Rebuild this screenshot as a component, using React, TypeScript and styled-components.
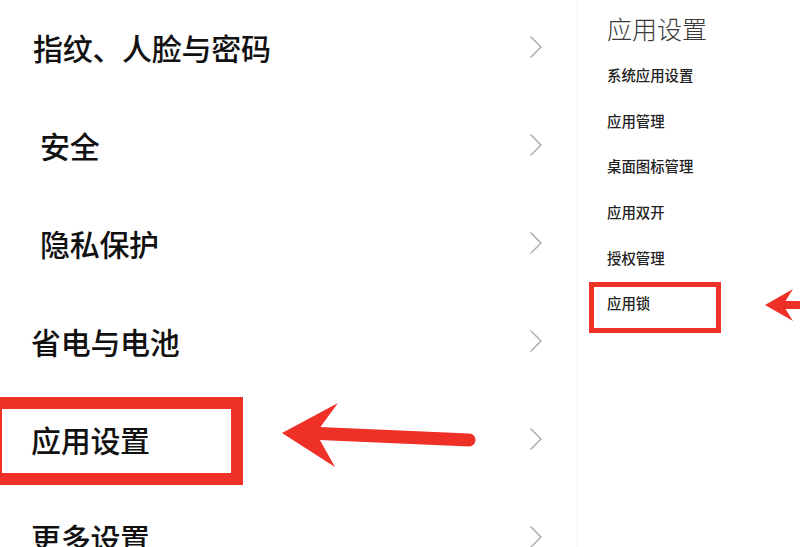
import React from 'react';
import styled, {createGlobalStyle} from 'styled-components';

const GlobalStyle = createGlobalStyle`
    html, body {
        margin:0;
        padding:0;
        background:#ffffff;
    }
    body {
        font-family:"Noto Sans CJK SC", "Noto Sans", sans-serif;
    }
`;

const Screen = styled.div`
    width:800px;
    height:547px;
    overflow:hidden;
    display:flex;
    background:#ffffff;
`;

const LeftPanel = styled.div`
    width:577px;
    flex-shrink:0;
    border-right:1px solid #f3f3f3;
    display:flex;
    flex-direction:column;
    margin-top:-2px;
`;

const Row = styled.div`
    position:relative;
    height:98px;
    flex-shrink:0;
    display:flex;
    align-items:center;
    justify-content:space-between;
    padding-right:34px;
`;

const RowLabel = styled.span<{indent:number}>`
    padding-left:${props => props.indent}px;
    font-size:30px;
    font-weight:500;
    color:#111111;
    letter-spacing:-0.3px;
`;

const BigMark = styled.div`
    position:absolute;
    left:-10px;
    top:7px;
    width:253px;
    height:88px;
    box-sizing:border-box;
    border:12px solid #ef3027;
`;

const SmallMark = styled.div`
    position:absolute;
    left:-18px;
    top:2px;
    width:132px;
    height:51px;
    box-sizing:border-box;
    border:5px solid #ef3027;
`;

const RightPanel = styled.div`
    flex:1;
    padding:12px 0 0 29px;
    display:flex;
    flex-direction:column;
`;

const PanelTitle = styled.div`
    height:32px;
    line-height:32px;
    font-size:25px;
    font-weight:300;
    color:#3a3a3a;
    margin-bottom:8px;
`;

const SubRow = styled.div`
    position:relative;
    height:45.6px;
    display:flex;
    align-items:center;
    font-size:14.4px;
    font-weight:500;
    color:#222222;
`;

const ArrowSvg = styled.svg<{x:number, y:number}>`
    position:absolute;
    left:${props => props.x}px;
    top:${props => props.y}px;
    overflow:visible;
`;

const Chevron = () => (
    <svg width="14" height="24" viewBox="0 0 14 24">
        <polyline points="1.5,1.5 12,12 1.5,22.5" fill="none" stroke="#b0b0b0" strokeWidth="1.5" />
    </svg>
);

const items = [
    {label:'指纹、人脸与密码', indent:33},
    {label:'安全', indent:40},
    {label:'隐私保护', indent:40},
    {label:'省电与电池', indent:31},
    {label:'应用设置', indent:31, marked:true},
    {label:'更多设置', indent:31},
];

const subItems = ['系统应用设置', '应用管理', '桌面图标管理', '应用双开', '授权管理', '应用锁'];

const App = () => {
    return (
        <Screen>
            <GlobalStyle />
            <LeftPanel>
                {items.map(item => (
                    <Row key={item.label}>
                        <RowLabel indent={item.indent}>{item.label}</RowLabel>
                        <Chevron />
                        {item.marked && (
                            <>
                                <BigMark />
                                <ArrowSvg x={278} y={10} width="202" height="70" viewBox="0 0 202 70">
                                    <line x1="30" y1="33" x2="191" y2="40" stroke="#ef3027" strokeWidth="13" strokeLinecap="round" />
                                    <polygon points="4,33 60,3 38,33 57,67" fill="#ef3027" />
                                </ArrowSvg>
                            </>
                        )}
                    </Row>
                ))}
            </LeftPanel>
            <RightPanel>
                <PanelTitle>应用设置</PanelTitle>
                {subItems.map((name, i) => (
                    <SubRow key={name}>
                        {name}
                        {i === subItems.length - 1 && (
                            <>
                                <SmallMark />
                                <ArrowSvg x={156} y={6} width="40" height="40" viewBox="0 0 40 40">
                                    <line x1="16" y1="19" x2="45" y2="19" stroke="#ef3027" strokeWidth="8" />
                                    <polygon points="2,19 30,3 20,19 30,35" fill="#ef3027" />
                                </ArrowSvg>
                            </>
                        )}
                    </SubRow>
                ))}
            </RightPanel>
        </Screen>
    );
};

export default App;
